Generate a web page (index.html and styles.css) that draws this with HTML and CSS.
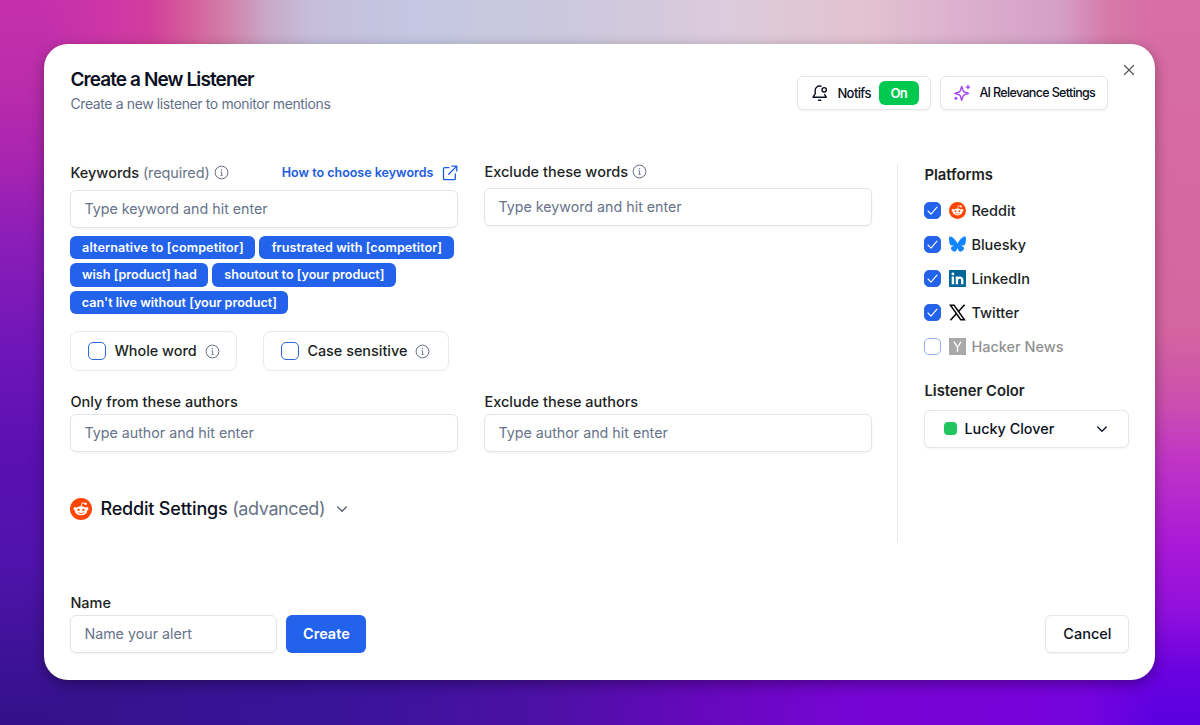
FILE: index.html
```
<!DOCTYPE html>
<html lang="en">
<head>
<meta charset="UTF-8" />
<meta name="viewport" content="width=device-width, initial-scale=1" />
<title>Create a New Listener</title>
<link rel="stylesheet" href="styles.css">
</head>
<body>
  <!-- shared icons -->
  <svg class="sprite" aria-hidden="true">
    <symbol id="info" viewBox="0 0 15 15">
      <circle cx="7.5" cy="7.5" r="6.4" fill="none" stroke="currentColor" stroke-width="1" />
      <circle cx="7.5" cy="4.7" r="0.7" fill="currentColor" />
      <path d="M6.5 6.8h1.1v3.6M6.5 10.4h2.2" fill="none" stroke="currentColor" stroke-width="0.9" />
    </symbol>
    <symbol id="check" viewBox="0 0 15 15">
      <path d="M3 8l3 3.1 6-6.9" fill="none" stroke="currentColor" stroke-width="1.1" stroke-linecap="round" stroke-linejoin="round" />
    </symbol>
    <symbol id="chevron" viewBox="0 0 12 12">
      <path d="M1.7 4l4.3 4.2L10.3 4" fill="none" stroke="currentColor" stroke-width="1.3" stroke-linecap="round" stroke-linejoin="round" />
    </symbol>
    <symbol id="reddit" viewBox="0 0 24 24">
      <circle cx="12" cy="12" r="12" fill="#ff4500" />
      <path d="M12 10l1.2-4.7 3.5.8" fill="none" stroke="#fff" stroke-width="1" />
      <circle cx="17" cy="6.2" r="1.4" fill="#fff" />
      <circle cx="5.6" cy="11.6" r="1.8" fill="#fff" />
      <circle cx="18.4" cy="11.6" r="1.8" fill="#fff" />
      <ellipse cx="12" cy="14" rx="6.8" ry="4.9" fill="#fff" />
      <circle cx="9.3" cy="12.9" r="1.3" fill="#ff4500" />
      <circle cx="14.7" cy="12.9" r="1.3" fill="#ff4500" />
      <path d="M9.2 16.1c1.5 1.2 4.1 1.2 5.6 0" fill="none" stroke="#ff4500" stroke-width="0.9" stroke-linecap="round" />
    </symbol>
  </svg>

  <div class="modal">
    <header class="header">
      <div>
        <h1>Create a New Listener</h1>
        <p class="subtitle">Create a new listener to monitor mentions</p>
      </div>
      <div class="header-actions">
        <button class="outline-btn notifs" type="button">
          <svg class="bell" viewBox="0 0 18 18" fill="none" stroke="currentColor" stroke-width="1.4" stroke-linecap="round" stroke-linejoin="round">
            <path d="M10 2.2C6.5 1.5 4.2 3.7 4.2 6.6v3.2L2 13.2h13.3l-1.6-2.6" />
            <circle cx="13.2" cy="5.8" r="2.2" />
            <path d="M7.5 16.2h2.3" />
          </svg>
          <span>Notifs</span>
          <span class="on">On</span>
        </button>
        <button class="outline-btn relevance" type="button">
          <svg class="sparkle" viewBox="0 0 18 18" fill="none" stroke="currentColor" stroke-width="1.4" stroke-linecap="round" stroke-linejoin="round">
            <path d="M8.7 2.5l1.4 4.3q.3.9 1.2 1.2l4.2 1.4-4.2 1.4q-.9.3-1.2 1.2l-1.4 4.3-1.4-4.3q-.3-.9-1.2-1.2L1.9 9.4 6.1 8q.9-.3 1.2-1.2z" />
            <path d="M15 1.4v3.4M13.3 3.1h3.4" />
            <circle cx="2.9" cy="14.3" r=".8" />
          </svg>
          <span>AI Relevance Settings</span>
        </button>
      </div>
      <button class="close" type="button" aria-label="Close">
        <svg viewBox="0 0 12 12"><path d="M1.5 1.5l9 9M10.5 1.5l-9 9" stroke="currentColor" stroke-width="1.2" stroke-linecap="round" /></svg>
      </button>
    </header>

    <main class="content">
      <div class="fields">
        <section class="keywords">
          <div class="label-row">
            <label for="keywords">Keywords <span class="muted">(required)</span></label>
            <svg class="info"><use href="#info" /></svg>
            <a class="help" href="#">How to choose keywords
              <svg viewBox="0 0 16 16" fill="none" stroke="currentColor" stroke-width="1.3" stroke-linecap="round" stroke-linejoin="round">
                <path d="M7 2.7H2.5Q1.5 2.7 1.5 3.7v10q0 1 1 1h9.8q1 0 1-1V9" />
                <path d="M10 1.2h4.8V6M14.6 1.4L6.7 9.3" />
              </svg>
            </a>
          </div>
          <input type="text" id="keywords" placeholder="Type keyword and hit enter" />
          <div class="tags">
            <span class="tag t1">alternative to [competitor]</span>
            <span class="tag t2">frustrated with [competitor]</span>
            <span class="tag t3">wish [product] had</span>
            <span class="tag t4">shoutout to [your product]</span>
            <span class="tag t5">can't live without [your product]</span>
          </div>
          <div class="options">
            <label class="option whole"><span class="box"></span><span>Whole word</span><svg class="info"><use href="#info" /></svg></label>
            <label class="option case"><span class="box"></span><span>Case sensitive</span><svg class="info"><use href="#info" /></svg></label>
          </div>
        </section>

        <section class="exclude">
          <div class="label-row">
            <label for="exclude">Exclude these words</label>
            <svg class="info"><use href="#info" /></svg>
          </div>
          <input type="text" id="exclude" placeholder="Type keyword and hit enter" />
        </section>

        <section>
          <div class="label-row author"><label for="authors">Only from these authors</label></div>
          <input type="text" id="authors" placeholder="Type author and hit enter" />
        </section>
        <section>
          <div class="label-row author"><label for="exclude_authors">Exclude these authors</label></div>
          <input type="text" id="exclude_authors" placeholder="Type author and hit enter" />
        </section>

        <div class="advanced">
          <svg class="reddit-lg"><use href="#reddit" /></svg>
          <h2>Reddit Settings <span class="muted">(advanced)</span></h2>
          <svg class="chevron"><use href="#chevron" /></svg>
        </div>
      </div>

      <aside class="sidebar">
        <h3>Platforms</h3>
        <ul class="platforms">
          <li>
            <span class="box checked"><svg><use href="#check" /></svg></span>
            <svg class="logo"><use href="#reddit" /></svg>
            <span>Reddit</span>
          </li>
          <li>
            <span class="box checked"><svg><use href="#check" /></svg></span>
            <svg class="logo" viewBox="0 0 24 24"><path fill="#1185fe" d="M5.2 2.2C8 4.2 10.9 8.3 12 10.5c1.100-2.200 4-6.300 6.800-8.300C20.800.7 24-.4 24 3.300c0 .7-.4 6.200-.7 7-.9 3.100-4.100 3.900-7 3.400 5 .9 6.300 3.700 3.500 6.500-5.200 5.300-7.500-1.300-7.800-3.500-.3 2.200-2.600 8.800-7.800 3.500-2.800-2.800-1.500-5.600 3.500-6.500-2.900.5-6.100-.3-7-3.400C.4 9.500 0 4 0 3.300 0-.4 3.200.7 5.200 2.200z" /></svg>
            <span>Bluesky</span>
          </li>
          <li>
            <span class="box checked"><svg><use href="#check" /></svg></span>
            <svg class="logo" viewBox="0 0 24 24">
              <rect width="24" height="24" rx="1" fill="#006699" />
              <circle cx="5.500" cy="5.500" r="2" fill="#fff" />
              <path d="M5.5 9.2v11" stroke="#fff" stroke-width="3.4" />
              <path d="M11.2 20.2v-11M11.2 14.5c0-4.8 7.5-5.2 7.500 0v5.700" fill="none" stroke="#fff" stroke-width="3.300" />
            </svg>
            <span>LinkedIn</span>
          </li>
          <li>
            <span class="box checked"><svg><use href="#check" /></svg></span>
            <svg class="logo" viewBox="0 0 24 24">
              <path d="M2 1.8h5.200l14.600 20.400h-5.200z" fill="none" stroke="#000" stroke-width="2" />
              <path d="M22 1l-8.900 9.800M10.700 13.300L2 23" stroke="#000" stroke-width="2.200" />
            </svg>
            <span>Twitter</span>
          </li>
          <li class="disabled">
            <span class="box"></span>
            <svg class="logo" viewBox="0 0 24 24">
              <rect width="24" height="24" fill="#555" />
              <path d="M7 5l5 8 5-8M12 12.500v7" fill="none" stroke="#fff" stroke-width="1.900" />
            </svg>
            <span>Hacker News</span>
          </li>
        </ul>
        <h3>Listener Color</h3>
        <button class="outline-btn select" type="button">
          <span class="swatch"></span>
          <span>Lucky Clover</span>
          <svg class="chevron"><use href="#chevron" /></svg>
        </button>
      </aside>
    </main>

    <footer class="footer">
      <div class="name-field">
        <label for="name">Name</label>
        <input type="text" id="name" placeholder="Name your alert" />
      </div>
      <button class="create" type="submit">Create</button>
      <button class="outline-btn cancel" type="button">Cancel</button>
    </footer>
  </div>
</body>
</html>
```
FILE: styles.css
```
* {
  box-sizing: border-box;
}
/* colour wash: top and bottom bands fade into the left and right sides */
body {
  margin: 0;
  height: 725px;
  padding: 44.4px;
  overflow: hidden;
  font-family: Inter, sans-serif;
  font-size: 14.5px;
  font-weight: 500;
  line-height: 20px;
  color: #1c1f24;
  background:
    linear-gradient(to right, rgba(203,53,167,0) 40px, #cb35a7 100px, #d23e9c 150px, #d55f9c 190px, #d282ab 230px, #c8a9c8 268px, #c5bedb 310px, #c5c7e2 420px, #ccc8dd 575px, #dccbdc 730px, #e3c2d0 865px, #dcb0ce 960px, #d59fc6 1060px, #d778a9 1110px, rgba(216,109,164,0) 1155px) 0 0 / 100% 72px no-repeat,
    linear-gradient(to right, rgba(55,18,142,0) 40px, #37128e 100px, #3a139a 350px, #4d10a6 550px, #6508bc 700px, #7505d2 840px, #7803d9 1000px, #7403df 1090px, rgba(106,2,224,0) 1155px) 0 100% / 100% 72px no-repeat,
    linear-gradient(to bottom, #c62fac 0, #bb2dab 80px, #a824b0 162px, #8e1eb8 230px, #7016b8 345px, #5a10b2 460px, #5013ac 560px, #3f1298 650px, #33118a 725px) 0 0 / 50% 100% no-repeat,
    linear-gradient(to bottom, #d86da4 0, #d565a0 330px, #cc50ae 400px, #c035c6 460px, #a818d8 550px, #9210dc 610px, #6a02e0 670px, #5a00e0 725px) 100% 0 / 50% 100% no-repeat;
}
svg {
  flex-shrink: 0;
}
.sprite {
  display: none;
}
.modal {
  width: 1111px;
  height: 635.5px;
  padding: 0 26px;
  background: #fff;
  border-radius: 24px;
  box-shadow: 0 4px 14px rgba(0,0,0,0.35);
}
h1, h2, h3, p, ul {
  margin: 0;
  padding: 0;
}
button, input {
  font-family: inherit;
}
.header {
  position: relative;
  display: flex;
  justify-content: space-between;
  height: 119.5px;
  padding: 22px 21px 0 0;
}
h1 {
  font-size: 19px;
  font-weight: 600;
  line-height: 27px;
  letter-spacing: -0.9px;
  color: #0b1022;
}
.subtitle {
  font-size: 14px;
  font-weight: 400;
  line-height: 22px;
  letter-spacing: -0.38px;
  color: #64708a;
}
.header-actions {
  display: flex;
  gap: 9px;
  padding-top: 9.5px;
}
.outline-btn {
  display: flex;
  align-items: center;
  padding: 0;
  border: 1px solid #e3e6ea;
  border-radius: 6px;
  background: #fff;
  box-shadow: 0 1px 2px rgba(0,0,0,0.05);
  color: #0b1022;
}
.notifs,
.relevance {
  height: 34px;
  font-size: 13px;
  font-weight: 500;
}
.notifs {
  width: 134px;
  padding-left: 13px;
  letter-spacing: -0.6px;
}
.bell {
  width: 18px;
  height: 18px;
  margin-right: 8px;
}
.on {
  width: 40px;
  height: 24px;
  margin-left: 8px;
  border-radius: 6px;
  background: #00c94f;
  color: #fff;
  font-weight: 600;
  line-height: 24px;
}
.relevance {
  width: 168px;
  padding-left: 12px;
  font-size: 12.5px;
  letter-spacing: -0.65px;
}
.sparkle {
  width: 18px;
  height: 18px;
  margin-right: 8px;
  color: #a344f3;
}
.close {
  position: absolute;
  top: 20px;
  right: -6px;
  display: flex;
  padding: 0;
  border: 0;
  background: none;
  color: #555;
}
.close svg {
  width: 12px;
  height: 12px;
}
.content {
  display: flex;
  height: 378px;
}
.fields {
  display: grid;
  grid-template-columns: 388px 388px;
  grid-template-rows: 229px 90px auto;
  column-gap: 26px;
  align-content: start;
  width: 827px;
}
.label-row {
  display: flex;
  align-items: center;
  height: 24px;
}
.keywords .label-row {
  height: 18px;
  margin-bottom: 8px;
}
.exclude .label-row {
  height: 16px;
  margin-bottom: 8px;
}
.label-row.author {
  height: 21px;
  padding-bottom: 3px;
}
.muted {
  color: #687386;
  font-weight: 400;
}
.keywords .muted {
  letter-spacing: -0.1px;
}
.info {
  width: 15px;
  height: 15px;
  margin-left: 4px;
  color: #687080;
}
.help {
  display: flex;
  align-items: center;
  gap: 9px;
  margin-left: auto;
  font-size: 12.5px;
  font-weight: 600;
  color: #1c5ce0;
  text-decoration: none;
}
.help svg {
  width: 16px;
  height: 16px;
}
input {
  display: block;
  width: 100%;
  height: 38px;
  padding: 0 13px 1px;
  border: 1px solid #e2e5e9;
  border-radius: 6px;
  background: #fff;
  box-shadow: 0 1px 2px rgba(0,0,0,0.05);
  font-size: 14.25px;
}
input::placeholder {
  color: #67738a;
  opacity: 1;
}
.tags {
  display: flex;
  flex-wrap: wrap;
  gap: 4px;
  margin-top: 8px;
}
.tag {
  height: 23.5px;
  border-radius: 6px;
  background: #2362ea;
  color: #fff;
  font-size: 12.6px;
  font-weight: 600;
  line-height: 23px;
  text-align: center;
}
.t1 {
  width: 185px;
  letter-spacing: 0.1px;
}
.t2 {
  width: 195px;
  letter-spacing: 0.06px;
}
.t3 {
  width: 138px;
}
.t4 {
  width: 184px;
}
.t5 {
  width: 218px;
}
.options {
  display: flex;
  gap: 26px;
  margin-top: 17px;
}
.option {
  display: flex;
  align-items: center;
  height: 40px;
  padding-left: 17px;
  border: 1px solid #e7e9ec;
  border-radius: 8px;
  font-size: 14.4px;
}
.whole {
  width: 167px;
}
.case {
  width: 186px;
}
.option .box {
  margin-right: 8px;
}
.option .info {
  margin-left: 8px;
}
.box {
  display: flex;
  align-items: center;
  justify-content: center;
  width: 18px;
  height: 18px;
  border: 1px solid #2b65df;
  border-radius: 5px;
}
.box.checked {
  background: #2362ea;
  color: #fff;
}
.box svg {
  width: 15px;
  height: 15px;
}
.advanced {
  display: flex;
  align-items: center;
  height: 53px;
}
.reddit-lg {
  width: 22px;
  height: 22px;
  margin-right: 8px;
}
h2 {
  font-size: 18px;
  font-weight: 500;
  line-height: 26px;
  letter-spacing: -0.18px;
  color: #0b1022;
}
h2 .muted {
  letter-spacing: -0.4px;
}
.chevron {
  width: 12px;
  height: 12px;
}
.advanced .chevron {
  margin-left: 11px;
  color: #555e6b;
}
.sidebar {
  width: 232px;
  padding-left: 26px;
  border-left: 1px solid #e7e9ec;
}
h3 {
  font-size: 14.8px;
  font-weight: 600;
  line-height: 22px;
}
.platforms {
  margin: 8px 0 16px;
  list-style: none;
}
.platforms li {
  display: flex;
  align-items: center;
  height: 34px;
}
.platforms .box {
  width: 17px;
  height: 17px;
  margin-right: 8px;
}
.logo {
  width: 17px;
  height: 17px;
  margin-right: 5px;
}
.disabled {
  opacity: 0.5;
}
.select {
  width: 205px;
  height: 38px;
  margin-top: 8px;
  padding: 0 20px 0 19px;
  font-size: 14.4px;
  font-weight: 500;
}
.select .chevron {
  margin-left: auto;
}
.swatch {
  width: 13px;
  height: 13px;
  margin-right: 7px;
  border-radius: 4px;
  background: #20c55f;
}
.footer {
  display: flex;
  align-items: flex-end;
  height: 111.5px;
}
.name-field {
  width: 207px;
  margin-right: 9px;
}
.name-field label {
  display: block;
  height: 22px;
}
.create {
  width: 80px;
  height: 38px;
  padding-bottom: 2px;
  border: 0;
  border-radius: 6px;
  background: #2362ea;
  color: #fff;
  font-size: 14.5px;
  font-weight: 600;
}
.cancel {
  justify-content: center;
  width: 84px;
  height: 38px;
  margin-left: auto;
  padding-bottom: 1px;
  font-size: 14.5px;
  font-weight: 500;
}
```
